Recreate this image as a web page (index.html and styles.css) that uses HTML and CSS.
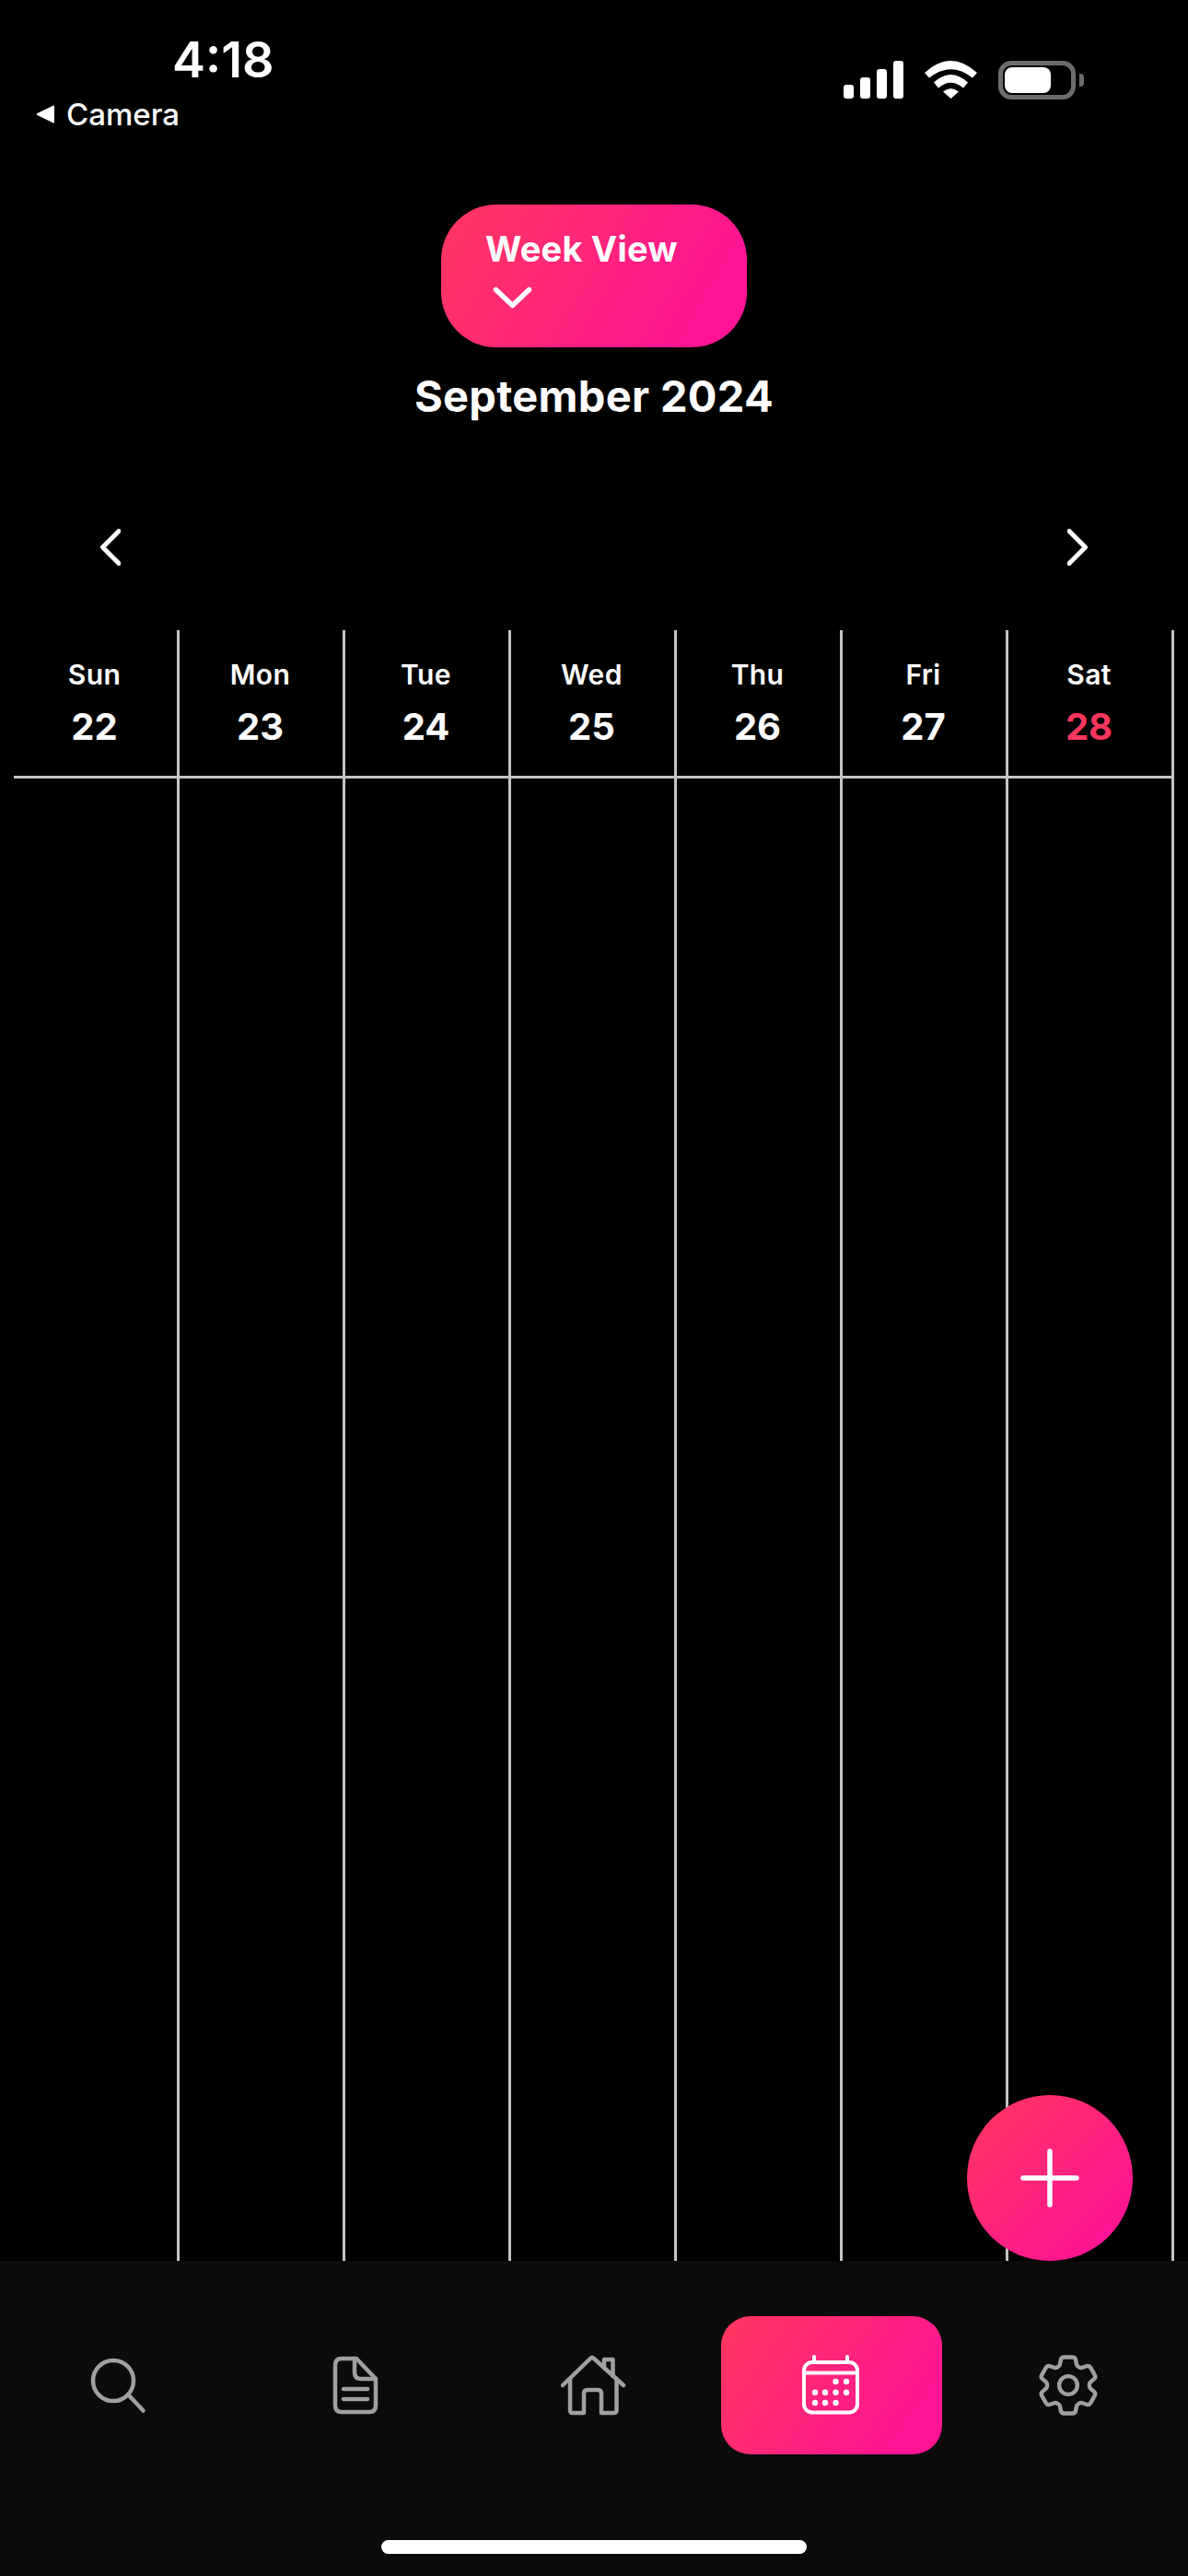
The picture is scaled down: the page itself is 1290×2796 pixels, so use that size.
FILE: index.html
```html
<!DOCTYPE html>
<html lang="en">
<head>
    <meta charset="UTF-8">
    <meta name="viewport" content="width=device-width, initial-scale=1.0">
    <title>Calendar</title>
    <link rel="stylesheet" href="styles.css">
</head>
<body>
    <div class="screen">
        <div class="status-bar">
            <div class="status-left">
                <div class="time">4:18</div>
                <div class="back-app">
                    <svg class="back-arrow" width="21" height="20" viewBox="0 0 21 20"><path d="M20 1.500V18.500Q20 20 18.500 19.200L1 10.800Q0 10 1 9.200L18.500 .8Q20 0 20 1.500Z" fill="#fff"/></svg>
                    <span>Camera</span>
                </div>
            </div>
            <div class="status-right">
                <div class="signal">
                    <span class="bar bar-1"></span>
                    <span class="bar bar-2"></span>
                    <span class="bar bar-3"></span>
                    <span class="bar bar-4"></span>
                </div>
                <svg width="57" height="41" viewBox="0 0 57 41" fill="#fff">
                    <path d="M0 13Q28.500 -13 57 13L52 18.500Q28.500 0 5 18.500Z"/>
                    <path d="M10 23.500Q28.500 6.500 47 23.500L42 29.500Q28.500 18 15 29.500Z"/>
                    <path d="M20 33.500Q28.500 26.500 37 33.500L28.500 41Z"/>
                </svg>
                <div class="battery">
                    <div class="battery-body"><div class="battery-fill"></div></div>
                    <div class="battery-nub"></div>
                </div>
            </div>
        </div>

        <button class="view-toggle">
            <span>Week View</span>
            <svg width="56" height="58" viewBox="0 0 56 58"><path d="M11.500 20.500L29.500 37.500L47.500 20.500" fill="none" stroke="#fff" stroke-width="5.500" stroke-linecap="round" stroke-linejoin="round"/></svg>
        </button>
        <h1 class="month-title">September 2024</h1>

        <div class="week-nav">
            <svg width="22" height="40" viewBox="0 0 22 40"><path d="M20 2.500L2.500 20L20 37.500" fill="none" stroke="#fff" stroke-width="5" stroke-linecap="round" stroke-linejoin="round"/></svg>
            <svg width="22" height="40" viewBox="0 0 22 40"><path d="M2 2.500L19.500 20L2 37.500" fill="none" stroke="#fff" stroke-width="5" stroke-linecap="round" stroke-linejoin="round"/></svg>
        </div>

        <div class="week-grid">
            <div class="day"><div class="day-head"><div class="day-name">Sun</div><div class="day-num">22</div></div></div>
            <div class="day"><div class="day-head"><div class="day-name">Mon</div><div class="day-num">23</div></div></div>
            <div class="day"><div class="day-head"><div class="day-name">Tue</div><div class="day-num">24</div></div></div>
            <div class="day"><div class="day-head"><div class="day-name">Wed</div><div class="day-num">25</div></div></div>
            <div class="day"><div class="day-head"><div class="day-name">Thu</div><div class="day-num">26</div></div></div>
            <div class="day"><div class="day-head"><div class="day-name">Fri</div><div class="day-num">27</div></div></div>
            <div class="day"><div class="day-head"><div class="day-name">Sat</div><div class="day-num today">28</div></div></div>
        </div>

        <button class="fab">
            <svg width="64" height="64" viewBox="0 0 64 64"><path d="M32 3V61M3 32H61" fill="none" stroke="#fff" stroke-width="5.500" stroke-linecap="round"/></svg>
        </button>

        <div class="tab-bar">
            <div class="tabs">
                <div class="tab">
                    <svg class="tab-icon" viewBox="0 0 72 72"><circle cx="30" cy="31" r="22"/><path d="M47 47L62.500 63.500"/></svg>
                </div>
                <div class="tab">
                    <svg class="tab-icon" viewBox="0 0 72 72"><path d="M34 7H20Q13 7 13 14V58Q13 65 20 65H50Q57 65 57 58V29L36 7Z"/><path d="M34 7V22Q34 29 41 29H57"/><path d="M22 40H48M22 51H48"/></svg>
                </div>
                <div class="tab">
                    <svg class="tab-icon" viewBox="0 0 72 72"><path d="M2 36L32 7Q34 5 36 7L68 36"/><path d="M10 29V63Q10 66 13 66H25V45Q25 41 29 41H40Q44 41 44 45V66H57.500Q60.500 66 60.500 63V29"/><path d="M47 17V8H56.500V26"/></svg>
                </div>
                <div class="tab tab-active">
                    <svg class="tab-icon" viewBox="0 0 72 72">
                        <rect x="6" y="11" width="58" height="54.500" rx="9"/>
                        <path d="M6 22.500H64M17 5V10M53 5V10"/>
                        <g class="dots">
                            <circle cx="40.500" cy="32" r="3.200"/><circle cx="52" cy="32" r="3.200"/>
                            <circle cx="18" cy="43.700" r="3.200"/><circle cx="29" cy="43.700" r="3.200"/><circle cx="40.500" cy="43.700" r="3.200"/><circle cx="52" cy="43.700" r="3.200"/>
                            <circle cx="18" cy="55" r="3.200"/><circle cx="29" cy="55" r="3.200"/><circle cx="40.500" cy="55" r="3.200"/>
                        </g>
                    </svg>
                </div>
                <div class="tab">
                    <svg class="tab-icon gear-icon" viewBox="1.700 1.400 21.200 21.200">
                        <path d="M9.594 3.94c.09-.542.56-.94 1.11-.94h2.593c.55 0 1.02.398 1.11.94l.213 1.281c.063.374.313.686.645.87.074.04.147.083.22.127.325.196.72.257 1.075.124l1.217-.456a1.125 1.125 0 0 1 1.37.49l1.296 2.247a1.125 1.125 0 0 1-.26 1.431l-1.003.827c-.293.241-.438.613-.43.992a7.723 7.723 0 0 1 0 .255c-.008.378.137.75.43.991l1.004.827c.424.35.534.955.26 1.43l-1.298 2.247a1.125 1.125 0 0 1-1.369.491l-1.217-.456c-.355-.133-.75-.072-1.076.124a6.47 6.47 0 0 1-.22.128c-.331.183-.581.495-.644.869l-.213 1.281c-.09.543-.56.94-1.11.94h-2.594c-.55 0-1.019-.398-1.11-.94l-.213-1.281c-.062-.374-.312-.686-.644-.87a6.52 6.52 0 0 1-.22-.127c-.325-.196-.72-.257-1.076-.124l-1.217.456a1.125 1.125 0 0 1-1.369-.49l-1.297-2.247a1.125 1.125 0 0 1 .26-1.431l1.004-.827c.292-.24.437-.613.43-.991a6.932 6.932 0 0 1 0-.255c.007-.38-.138-.751-.43-.992l-1.004-.827a1.125 1.125 0 0 1-.26-1.43l1.297-2.247a1.125 1.125 0 0 1 1.37-.491l1.216.456c.356.133.751.072 1.076-.124.072-.044.146-.086.22-.128.332-.183.582-.495.644-.869l.214-1.28Z"/>
                        <circle cx="12" cy="12" r="2.900"/>
                    </svg>
                </div>
            </div>
            <div class="home-indicator"></div>
        </div>
    </div>
</body>
</html>
```

FILE: styles.css
```css
* {
    box-sizing: border-box;
}
body {
    margin: 0;
    background: #000;
    font-family: 'Inter', sans-serif;
    color: #fff;
}
.screen {
    position: relative;
    display: flex;
    flex-direction: column;
    width: 1290px;
    height: 2796px;
    overflow: hidden;
    background: #000;
}

/* status bar */
.status-bar {
    display: flex;
    justify-content: space-between;
    align-items: flex-start;
    height: 222px;
    padding: 35px 113px 0 39px;
}
.time {
    margin-left: 148px;
    font-size: 54px;
    line-height: 60px;
    font-weight: 600;
}
.back-app {
    display: flex;
    align-items: center;
    gap: 12px;
    margin-top: 9px;
    height: 40px;
    font-size: 33px;
    font-weight: 500;
}
.status-right {
    display: flex;
    align-items: flex-start;
    gap: 23px;
    margin-top: 31px;
}
.signal {
    display: flex;
    align-items: flex-end;
    gap: 7px;
    height: 41px;
}
.bar {
    width: 11px;
    border-radius: 3px;
    background: #fff;
}
.bar-1 { height: 15px; }
.bar-2 { height: 23px; }
.bar-3 { height: 32px; }
.bar-4 { height: 41px; }
.battery {
    display: flex;
    align-items: center;
    gap: 4px;
}
.battery-body {
    width: 84px;
    height: 42px;
    padding: 2px;
    border: 5px solid #6c6c6c;
    border-radius: 14px;
}
.battery-fill {
    width: 50px;
    height: 100%;
    border-radius: 8px;
    background: #fff;
}
.battery-nub {
    width: 5px;
    height: 14px;
    border-radius: 0 4px 4px 0;
    background: #6c6c6c;
}

/* header */
.view-toggle {
    display: flex;
    flex-direction: column;
    align-items: flex-start;
    flex-shrink: 0;
    width: 332px;
    height: 155px;
    margin: 0 auto;
    padding: 24px 0 0 48px;
    border: none;
    border-radius: 60px;
    background: linear-gradient(120deg, #ff375f, #ff1493 85%);
    color: #fff;
    font-family: inherit;
    font-size: 38px;
    line-height: 48px;
    font-weight: 700;
    letter-spacing: .2px;
}
.view-toggle span {
    white-space: nowrap;
}
.month-title {
    margin: 25px 0 0;
    text-align: center;
    font-size: 47px;
    line-height: 56px;
    font-weight: 700;
    letter-spacing: .3px;
}
.week-nav {
    display: flex;
    justify-content: space-between;
    margin-top: 116px;
    padding: 0 109px;
}

/* week grid */
.week-grid {
    display: flex;
    flex: 1;
    margin: 70px 0 0 15px;
}
.day {
    width: 180px;
    border-right: 3px solid #c4c4c4;
}
.day-head {
    height: 161px;
    padding: 30px 2px 0 0;
    border-bottom: 3px solid #c4c4c4;
    text-align: center;
}
.day-name {
    font-size: 30px;
    line-height: 36px;
    font-weight: 600;
    letter-spacing: .4px;
}
.day-num {
    margin-top: 17px;
    font-size: 40px;
    line-height: 44px;
    font-weight: 700;
}
.today {
    color: #ff375f;
}

/* add button */
.fab {
    position: absolute;
    right: 60px;
    bottom: 342px;
    display: flex;
    align-items: center;
    justify-content: center;
    width: 180px;
    height: 180px;
    padding: 0;
    border: none;
    border-radius: 50%;
    background: linear-gradient(135deg, #ff375f, #ff1493 85%);
}

/* bottom tabs */
.tab-bar {
    flex-shrink: 0;
    height: 342px;
    padding-top: 60px;
    background: #0b0b0b;
}
.tabs {
    display: flex;
    height: 150px;
}
.tab {
    display: flex;
    flex: 1;
    align-items: center;
    justify-content: center;
}
.tab-active {
    flex: none;
    width: 240px;
    margin: 0 9px;
    border-radius: 32px;
    background: linear-gradient(125deg, #ff375f, #ff1493 85%);
}
.tab-icon {
    width: 72px;
    height: 72px;
    fill: none;
    stroke: #a0a0a0;
    stroke-width: 4.500px;
    stroke-linecap: round;
    stroke-linejoin: round;
}
.tab-active .tab-icon {
    stroke: #fff;
    stroke-width: 4px;
}
.gear-icon {
    stroke-width: 1.300px;
}
.dots circle {
    fill: #fff;
    stroke: none;
}
.home-indicator {
    width: 462px;
    height: 15px;
    margin: 93px auto 0;
    border-radius: 8px;
    background: #fff;
}
```
